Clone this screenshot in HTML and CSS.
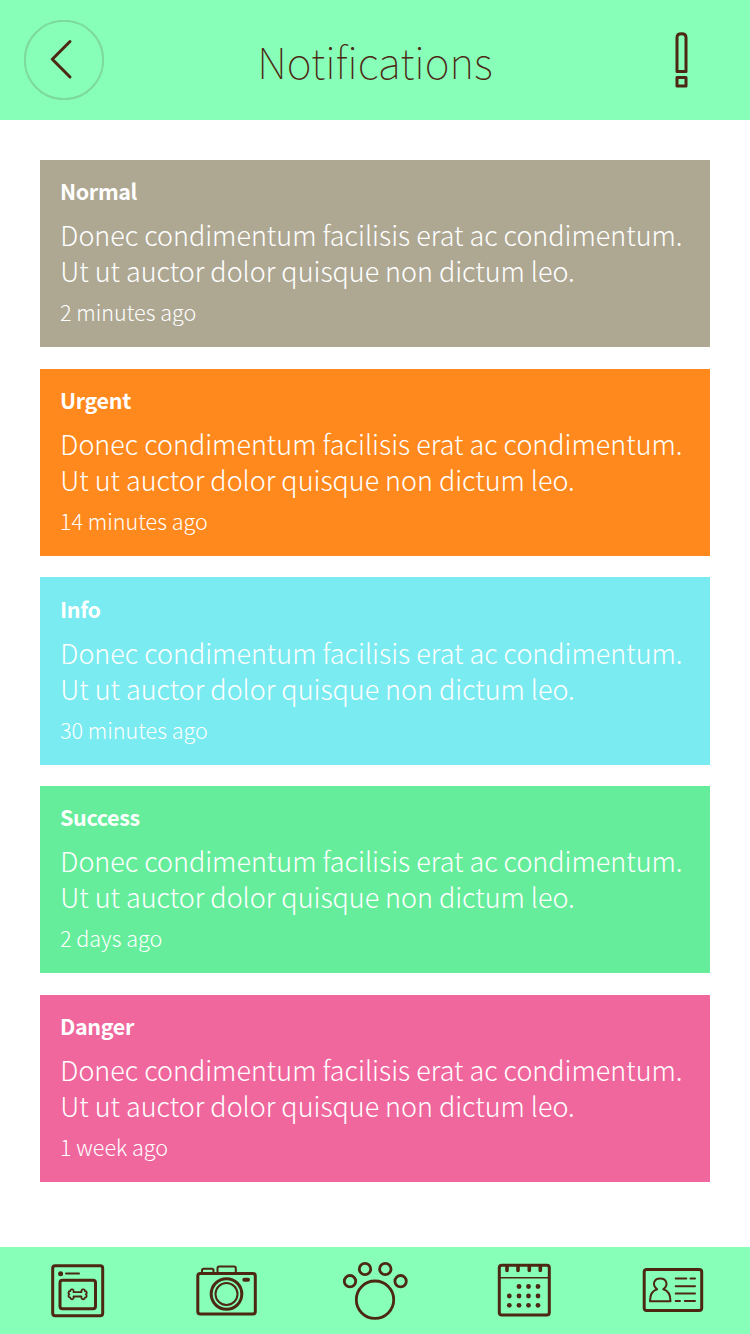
FILE: index.html
```html
<!DOCTYPE html>
<html lang="en">
<head>
<meta charset="utf-8">
<title>Notifications</title>
<link rel="stylesheet" href="styles.css">
</head>
<body>
<div class="screen">
  <header class="topbar">
    <button class="back" aria-label="Back">
      <svg width="80" height="80" viewBox="24 20 80 80"><circle class="ring" cx="64" cy="60" r="39.2"/><path d="M70 41.5 52.300 59.300 70 77" stroke-width="3"/></svg>
    </button>
    <h1 class="heading">Notifications</h1>
    <svg class="alert" width="16" height="60" viewBox="674 30 16 60"><path d="M677 71.500V37.500Q677 33.700 681.500 33.700T686 37.500V71.500ZM677 77.500H686V86H677Z" stroke-width="3"/></svg>
  </header>
  <main class="list">
    <article class="card normal">
      <h2 class="kind">Normal</h2>
      <p class="message">Donec condimentum facilisis erat ac condimentum.<br>Ut ut auctor dolor quisque non dictum leo.</p>
      <p class="time">2 minutes ago</p>
    </article>
    <article class="card urgent">
      <h2 class="kind">Urgent</h2>
      <p class="message">Donec condimentum facilisis erat ac condimentum.<br>Ut ut auctor dolor quisque non dictum leo.</p>
      <p class="time">14 minutes ago</p>
    </article>
    <article class="card info">
      <h2 class="kind">Info</h2>
      <p class="message">Donec condimentum facilisis erat ac condimentum.<br>Ut ut auctor dolor quisque non dictum leo.</p>
      <p class="time">30 minutes ago</p>
    </article>
    <article class="card success">
      <h2 class="kind">Success</h2>
      <p class="message">Donec condimentum facilisis erat ac condimentum.<br>Ut ut auctor dolor quisque non dictum leo.</p>
      <p class="time">2 days ago</p>
    </article>
    <article class="card danger">
      <h2 class="kind">Danger</h2>
      <p class="message">Donec condimentum facilisis erat ac condimentum.<br>Ut ut auctor dolor quisque non dictum leo.</p>
      <p class="time">1 week ago</p>
    </article>
  </main>
  <nav class="tabs">
    <svg class="tab" viewBox="30 1247 100 87">
      <rect x="52.700" y="1265.700" width="50" height="50" rx="2.500" stroke-width="3"/>
      <rect x="60" y="1280.200" width="35.500" height="28.500" rx="2.500" stroke-width="3"/>
      <circle class="solid" cx="60.600" cy="1273.700" r="2.500"/><path d="M66 1273.500H79" stroke-width="2"/>
      <path d="M73.500 1292.200H81.500C80.500 1289 84.500 1288.300 84.900 1291C87.500 1291.500 87 1293.800 85.800 1294.300C87 1295 87.300 1297.300 84.900 1297.700C84.300 1300.300 80.600 1299.400 81.500 1296.500H73.500C74.500 1299.600 70.800 1300.200 70.300 1297.700C67.900 1297.200 68.200 1295 69.400 1294.300C68.100 1293.700 67.800 1291.500 70.300 1291C70.700 1288.300 74.500 1289 73.500 1292.200Z" stroke-width="1.800"/>
    </svg>
    <svg class="tab" viewBox="178 1247 100 87">
      <rect x="197.800" y="1273.500" width="57.500" height="40.500" rx="2.500" stroke-width="3"/>
      <path d="M202 1273V1270.500Q202 1268.800 203.700 1268.800H212Q213.500 1268.800 213.500 1270.500V1273M217.500 1273V1268.300Q217.500 1266.500 219.300 1266.500H234Q235.800 1266.500 235.800 1268.300V1273" stroke-width="2"/>
      <circle cx="226.500" cy="1294" r="15.300" stroke-width="3"/><circle cx="226.500" cy="1294" r="11" stroke-width="2"/>
      <rect class="solid" x="242.300" y="1277.700" width="7.700" height="4" rx="2"/>
    </svg>
    <svg class="tab" viewBox="327 1247 100 87">
      <g stroke-width="2.800"><circle cx="375" cy="1299.700" r="18.700"/><circle cx="350" cy="1281.200" r="5.700"/><circle cx="365" cy="1269" r="5.700"/><circle cx="385.300" cy="1269" r="5.700"/><circle cx="400.600" cy="1281.200" r="5.700"/></g>
    </svg>
    <svg class="tab" viewBox="475 1247 100 87">
      <rect x="499.300" y="1265.300" width="50" height="49.700" rx="2.500" stroke-width="3"/>
      <path d="M499 1277.800H549" stroke-width="1.600"/>
      <path d="M507 1266V1270.500M518 1266V1270.500M529.300 1266V1270.500M540.300 1266V1270.500" stroke-width="3.600"/>
      <g class="solid"><circle cx="519" cy="1286.500" r="2.400"/><circle cx="528.500" cy="1286.500" r="2.400"/><circle cx="538" cy="1286.500" r="2.400"/><circle cx="509.300" cy="1296" r="2.400"/><circle cx="519" cy="1296" r="2.400"/><circle cx="528.500" cy="1296" r="2.400"/><circle cx="538" cy="1296" r="2.400"/><circle cx="509.300" cy="1305.300" r="2.400"/><circle cx="519" cy="1305.300" r="2.400"/><circle cx="528.500" cy="1305.300" r="2.400"/><circle cx="538" cy="1305.300" r="2.400"/></g>
    </svg>
    <svg class="tab" viewBox="623 1247 100 87">
      <rect x="644.200" y="1269.500" width="57.500" height="41" rx="2.500" stroke-width="3"/>
      <path d="M650 1301.200H670.500C670.500 1295 668 1290.500 663.300 1289.200C669 1285 666.500 1278.500 660.200 1278.500S651.500 1285 657.200 1289.200C652.500 1290.500 650 1295 650 1301.200Z" stroke-width="2"/>
      <path d="M675.700 1278.500H686.300M690.500 1278.500H695M675.700 1286.200H695M675.700 1293.600H695M675.700 1301H680M684.800 1301H695" stroke-width="2"/>
    </svg>
  </nav>
</div>
</body>
</html>
```
FILE: styles.css
```css
* { box-sizing: border-box; }
body {
  margin: 0;
  background: #fff;
  color: #4c2813;
  font-family: "Noto Sans CJK SC", "Noto Sans", sans-serif;
}
.screen {
  display: flex;
  flex-direction: column;
  width: 750px;
  height: 1334px;
}
svg {
  fill: none;
  stroke: currentColor;
  stroke-linecap: round;
  stroke-linejoin: round;
}
.solid { fill: currentColor; stroke: none; }
.topbar {
  display: grid;
  grid-template-columns: 130px 1fr 130px;
  align-items: center;
  height: 120px;
  background: #88ffb8;
}
.back {
  margin: 0 0 0 24px;
  padding: 0;
  width: 80px;
  height: 80px;
  border: 0;
  background: none;
  color: inherit;
}
.back svg { display: block; }
.ring { stroke: #7dd99c; stroke-width: 2; }
.heading {
  margin: 0;
  padding-top: 2px;
  text-align: center;
  white-space: nowrap;
  font-size: 42.300px;
  line-height: 60px;
  font-weight: 100;
}
.alert { margin-left: 54px; }
.list {
  display: flex;
  flex-direction: column;
  gap: 21.200px;
  flex: 1;
  padding: 40px 40px 0;
}
.card {
  height: 187.450px;
  padding: 19.400px 20px 0;
  color: #fff;
}
.normal { background: #aea893; }
.urgent { background: #ff891d; }
.info { background: #7aebf0; }
.success { background: #66ed9c; }
.danger { background: #f0679e; }
.kind, .message, .time { margin: 0; white-space: nowrap; }
.kind { font-size: 21.500px; line-height: 24px; font-weight: 700; letter-spacing: -0.350px; }
.message { margin-top: 14.100px; padding-left: 0.300px; font-size: 26.920px; line-height: 36px; font-weight: 300; }
.time { margin-top: 10.900px; font-size: 21.550px; line-height: 24px; font-weight: 300; }
.tabs {
  display: grid;
  grid-template-columns: 148px 149px 148px 148px 100px;
  height: 87px;
  padding-left: 30px;
  background: #88ffb8;
}
.tab { width: 100px; height: 87px; }
```
